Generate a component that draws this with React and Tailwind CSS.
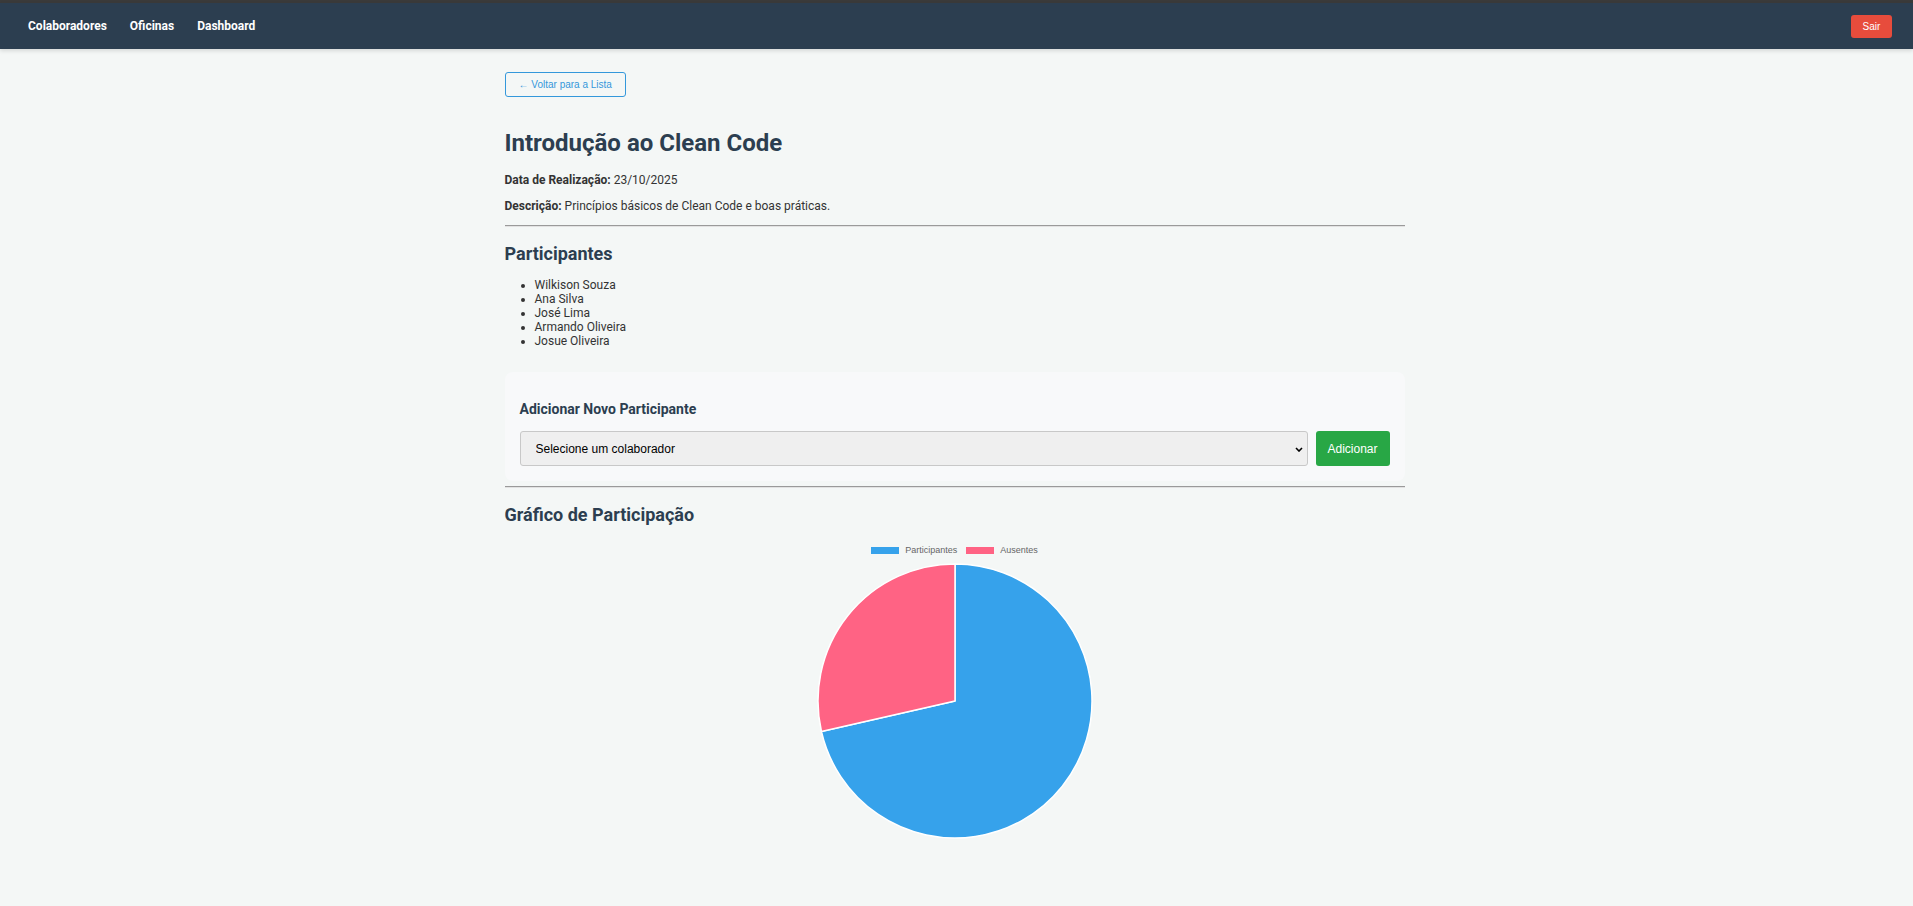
import { useState } from 'react';

const participantes = ['Wilkison Souza', 'Ana Silva', 'José Lima', 'Armando Oliveira', 'Josue Oliveira'];

function PieChart() {
  // 5 participantes, 2 ausentes
  return (
    <div className="mt-[15px] flex flex-col items-center">
      <div className="mt-[7px] flex h-[7px] items-center font-['Liberation_Sans',Arial,sans-serif] text-[9px] leading-[9px] text-[#666]">
        <span className="h-[7px] w-[28px] bg-[#36a2eb]" />
        <span className="ml-[6px]">Participantes</span>
        <span className="ml-[9px] h-[7px] w-[28px] bg-[#ff6384]" />
        <span className="ml-[6px]">Ausentes</span>
      </div>
      <svg className="mt-[8px]" width="278" height="278" viewBox="0 0 278 278">
        <path d="M139 139 L139 2 A137 137 0 1 1 5.43 169.49 Z" fill="#36a2eb" stroke="#fff" strokeWidth="1.5" strokeLinejoin="round" />
        <path d="M139 139 L5.43 169.49 A137 137 0 0 1 139 2 Z" fill="#ff6384" stroke="#fff" strokeWidth="1.5" strokeLinejoin="round" />
      </svg>
    </div>
  );
}

function Divider({ className = '' }) {
  return <div className={`border-t border-b border-t-[#9a9a9a] border-b-[#e2e2e2] ${className}`} />;
}

export default function App() {
  const [colab, setColab] = useState('');

  return (
    <div className="min-h-screen bg-[#f4f7f6] font-['Roboto',sans-serif] text-[12px] text-[#333]">
      <div className="h-[3px] bg-[#3a3a3a]" />
      <nav className="flex h-[46px] items-center justify-between bg-[#2c3e50] pl-[28px] pr-[21px] shadow-[0_2px_4px_rgba(0,0,0,0.12)]">
        <div className="flex items-center gap-[23px] text-[12px] font-bold text-white">
          <a href="#">Colaboradores</a>
          <a href="#">Oficinas</a>
          <a href="#">Dashboard</a>
        </div>
        <button className="h-[23px] w-[41px] rounded-[3px] bg-[#e74c3c] font-['Liberation_Sans',Arial,sans-serif] text-[10px] text-white">
          Sair
        </button>
      </nav>

      <main className="ml-[calc(50%-452px)] w-[900px] pt-[23px] pb-[60px]">
        <button className="h-[25px] rounded-[3px] border border-[#3498db] px-[13px] font-['Liberation_Sans',Arial,sans-serif] text-[10px] text-[#3498db]">
          ← Voltar para a Lista
        </button>

        <h1 className="mt-[32px] text-[24px] font-bold leading-[28px] text-[#2c3e50]">Introdução ao Clean Code</h1>
        <p className="mt-[16px] leading-[14px]">
          <strong>Data de Realização:</strong> 23/10/2025
        </p>
        <p className="mt-[12px] leading-[14px]">
          <strong>Descrição:</strong> Princípios básicos de Clean Code e boas práticas.
        </p>
        <Divider className="mt-[12px]" />

        <h2 className="mt-[16px] text-[18px] font-bold leading-[21px] text-[#2c3e50]">Participantes</h2>
        <ul className="mt-[14px] list-disc pl-[30px] leading-[14px]">
          {participantes.map((p) => (
            <li key={p}>{p}</li>
          ))}
        </ul>

        <div className="mt-[24px] rounded-[8px] bg-[#f8f9fa] px-[15px] pt-[29px] pb-[15px]">
          <h3 className="mb-[14px] text-[14px] font-bold leading-[16px] text-[#2c3e50]">Adicionar Novo Participante</h3>
          <div className="flex gap-[8px]">
            <div className="relative flex-1">
              <select
                value={colab}
                onChange={(e) => setColab(e.target.value)}
                className="h-[35px] w-full appearance-none rounded-[3px] border border-[#c8c8c8] bg-[#efefef] pl-[15px] font-['Liberation_Sans',Arial,sans-serif] text-[12px] text-black"
              >
                <option value="">Selecione um colaborador</option>
              </select>
              <svg className="pointer-events-none absolute right-[5px] top-[16px]" width="8" height="5" viewBox="0 0 8 5">
                <path d="M1 1 L4 4 L7 1" fill="none" stroke="#000" strokeWidth="1.6" />
              </svg>
            </div>
            <button className="h-[35px] w-[74px] rounded-[3px] bg-[#28a745] font-['Liberation_Sans',Arial,sans-serif] text-[12px] text-white">
              Adicionar
            </button>
          </div>
        </div>
        <Divider className="mt-[5px]" />

        <h2 className="mt-[16px] text-[18px] font-bold leading-[21px] text-[#2c3e50]">Gráfico de Participação</h2>
        <PieChart />
      </main>
    </div>
  );
}
